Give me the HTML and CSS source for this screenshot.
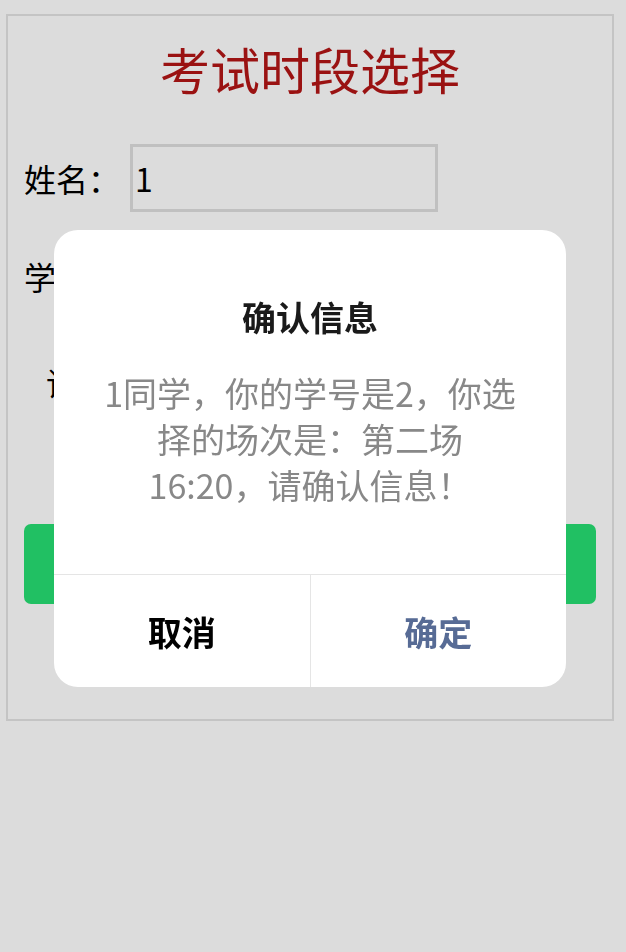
FILE: index.html
```html
<!DOCTYPE html>
<html lang="zh-CN">
<head>
  <meta charset="UTF-8">
  <title>考试时段选择</title>
  <link rel="stylesheet" href="styles.css">
</head>
<body>

<div class="box">
  <h1>考试时段选择</h1>

  <div class="row">
    <label>姓名：</label>
    <input id="name" value="1">
  </div>

  <div class="row">
    <label>学号：</label>
    <input id="sno" value="2">
  </div>

  <div class="row pick">
    <span>请选择考试场次：第二场 16:20</span>
  </div>

  <button class="submit">提交</button>
</div>

<div class="mask">
  <div class="modal">
    <div class="modal-title">确认信息</div>
    <div class="modal-body">1同学，你的学号是2，你选择的场次是：第二场16:20，请确认信息！</div>
    <div class="modal-foot">
      <div class="btn cancel">取消</div>
      <div class="btn ok">确定</div>
    </div>
  </div>
</div>

</body>
</html>
```

FILE: styles.css
```css
body { margin: 0; background: #dcdcdc; font-family: "Noto Sans CJK SC", "Noto Sans", sans-serif; color: #000; }
.box { width: 608px; box-sizing: border-box; margin: 14px 0 0 6px; padding: 0 16px 115px; border: 2px solid #c4c4c4; }
h1 { margin: 20px 0 0; font-size: 50px; line-height: 64px; font-weight: normal; color: #9a1212; text-align: center; }
.row { display: flex; align-items: center; height: 68px; margin-top: 30px; font-size: 32px; }
.row:first-of-type { margin-top: 44px; }
.row label { width: 106px; }
.row input { width: 308px; height: 68px; box-sizing: border-box; padding: 0 0 0 2px; border: 3px solid #c0c0c0; background: transparent; font: inherit; color: #000; }
.pick { margin-top: 38px; padding-left: 22px; }
.submit { display: block; width: 100%; height: 80px; margin-top: 108px; border: none; border-radius: 7px; background: #21c063; color: #fff; font: inherit; font-size: 34px; }

.mask { position: fixed; top: 0; left: 0; right: 0; bottom: 0; display: flex; justify-content: center; align-items: flex-start; padding: 230px 6px 0 0; }
.modal { width: 512px; background: #fff; border-radius: 24px; overflow: hidden; text-align: center; }
.modal-title { padding-top: 63px; font-size: 34px; line-height: 48px; font-weight: bold; color: #1a1a1a; }
.modal-body { margin-top: 29px; padding: 0 48px 66px; font-size: 34px; line-height: 46px; color: #888; }
.modal-foot { display: flex; height: 112px; border-top: 1px solid #e5e5e5; }
.btn { flex: 1; display: flex; align-items: center; justify-content: center; font-size: 34px; font-weight: bold; }
.cancel { border-right: 1px solid #e5e5e5; color: #000; }
.ok { color: #576b95; }
```
